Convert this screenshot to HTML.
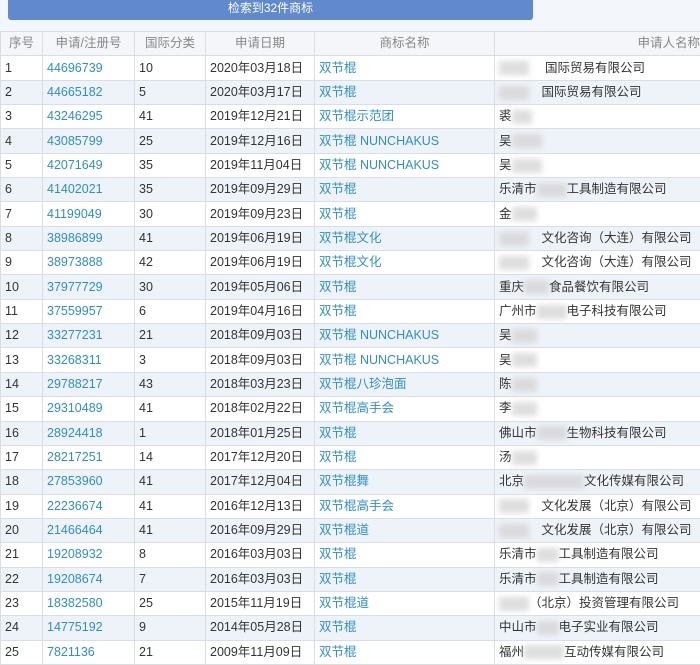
<!DOCTYPE html><html><head><meta charset="utf-8"><style>
body{margin:0;width:700px;height:664px;overflow:hidden;background:#fff;font-family:"Liberation Sans","Noto Sans CJK SC",sans-serif;font-size:12.5px;color:#333}
.top{position:absolute;left:0;top:0;width:700px;height:31px;background:#f3f6fa}
.btn{position:absolute;left:8px;top:-2px;width:525px;height:22px;background:#6189cd;border-radius:3px;color:#fff;text-align:center;line-height:20px;font-size:12px}
table{position:absolute;left:0;top:31px;border-collapse:collapse;width:760px;table-layout:fixed}
tr{height:24.35px}
td,th{border:1px solid #d9dee5;padding:0 0 0 4px;white-space:nowrap;overflow:hidden;text-align:left;font-weight:normal;line-height:15px;vertical-align:middle}
th{background:#f4f6f9;color:#888;text-align:center;padding:0}
tr:nth-child(odd) td{background:#eef3f9}
.b{color:#2f8fc8}
.z{display:inline-block;height:14px;background:#d0d0d0;filter:blur(3px);vertical-align:middle;opacity:.7}
</style></head><body>
<div class="top"><div class="btn">检索到32件商标</div></div>
<table>
<colgroup><col style="width:42px"><col style="width:92px"><col style="width:71px"><col style="width:109px"><col style="width:180px"><col style="width:266px"></colgroup>
<tr><th>序号</th><th>申请/注册号</th><th>国际分类</th><th>申请日期</th><th>商标名称</th><th style="text-align:right;padding-right:60px">申请人名称</th></tr>
<tr><td>1</td><td class="b">44696739</td><td>10</td><td>2020年03月18日</td><td class="b">双节棍</td><td><span class="z" style="width:30px"></span>　 国际贸易有限公司</td></tr>
<tr><td>2</td><td class="b">44665182</td><td>5</td><td>2020年03月17日</td><td class="b">双节棍</td><td><span class="z" style="width:30px"></span>　国际贸易有限公司</td></tr>
<tr><td>3</td><td class="b">43246295</td><td>41</td><td>2019年12月21日</td><td class="b">双节棍示范团</td><td>裘<span class="z" style="width:20px"></span></td></tr>
<tr><td>4</td><td class="b">43085799</td><td>25</td><td>2019年12月16日</td><td class="b">双节棍 NUNCHAKUS</td><td>吴<span class="z" style="width:30px"></span></td></tr>
<tr><td>5</td><td class="b">42071649</td><td>35</td><td>2019年11月04日</td><td class="b">双节棍 NUNCHAKUS</td><td>吴<span class="z" style="width:30px"></span></td></tr>
<tr><td>6</td><td class="b">41402021</td><td>35</td><td>2019年09月29日</td><td class="b">双节棍</td><td>乐清市<span class="z" style="width:30px"></span>工具制造有限公司</td></tr>
<tr><td>7</td><td class="b">41199049</td><td>30</td><td>2019年09月23日</td><td class="b">双节棍</td><td>金<span class="z" style="width:25px"></span></td></tr>
<tr><td>8</td><td class="b">38986899</td><td>41</td><td>2019年06月19日</td><td class="b">双节棍文化</td><td><span class="z" style="width:30px"></span>　文化咨询（大连）有限公司</td></tr>
<tr><td>9</td><td class="b">38973888</td><td>42</td><td>2019年06月19日</td><td class="b">双节棍文化</td><td><span class="z" style="width:30px"></span>　文化咨询（大连）有限公司</td></tr>
<tr><td>10</td><td class="b">37977729</td><td>30</td><td>2019年05月06日</td><td class="b">双节棍</td><td>重庆<span class="z" style="width:25px"></span>食品餐饮有限公司</td></tr>
<tr><td>11</td><td class="b">37559957</td><td>6</td><td>2019年04月16日</td><td class="b">双节棍</td><td>广州市<span class="z" style="width:30px"></span>电子科技有限公司</td></tr>
<tr><td>12</td><td class="b">33277231</td><td>21</td><td>2018年09月03日</td><td class="b">双节棍 NUNCHAKUS</td><td>吴<span class="z" style="width:25px"></span></td></tr>
<tr><td>13</td><td class="b">33268311</td><td>3</td><td>2018年09月03日</td><td class="b">双节棍 NUNCHAKUS</td><td>吴<span class="z" style="width:25px"></span></td></tr>
<tr><td>14</td><td class="b">29788217</td><td>43</td><td>2018年03月23日</td><td class="b">双节棍八珍泡面</td><td>陈<span class="z" style="width:25px"></span></td></tr>
<tr><td>15</td><td class="b">29310489</td><td>41</td><td>2018年02月22日</td><td class="b">双节棍高手会</td><td>李<span class="z" style="width:25px"></span></td></tr>
<tr><td>16</td><td class="b">28924418</td><td>1</td><td>2018年01月25日</td><td class="b">双节棍</td><td>佛山市<span class="z" style="width:30px"></span>生物科技有限公司</td></tr>
<tr><td>17</td><td class="b">28217251</td><td>14</td><td>2017年12月20日</td><td class="b">双节棍</td><td>汤<span class="z" style="width:25px"></span></td></tr>
<tr><td>18</td><td class="b">27853960</td><td>41</td><td>2017年12月04日</td><td class="b">双节棍舞</td><td>北京<span class="z" style="width:60px"></span>文化传媒有限公司</td></tr>
<tr><td>19</td><td class="b">22236674</td><td>41</td><td>2016年12月13日</td><td class="b">双节棍高手会</td><td><span class="z" style="width:30px"></span>　文化发展（北京）有限公司</td></tr>
<tr><td>20</td><td class="b">21466464</td><td>41</td><td>2016年09月29日</td><td class="b">双节棍道</td><td><span class="z" style="width:30px"></span>　文化发展（北京）有限公司</td></tr>
<tr><td>21</td><td class="b">19208932</td><td>8</td><td>2016年03月03日</td><td class="b">双节棍</td><td>乐清市<span class="z" style="width:22px"></span>工具制造有限公司</td></tr>
<tr><td>22</td><td class="b">19208674</td><td>7</td><td>2016年03月03日</td><td class="b">双节棍</td><td>乐清市<span class="z" style="width:22px"></span>工具制造有限公司</td></tr>
<tr><td>23</td><td class="b">18382580</td><td>25</td><td>2015年11月19日</td><td class="b">双节棍道</td><td><span class="z" style="width:30px"></span>（北京）投资管理有限公司</td></tr>
<tr><td>24</td><td class="b">14775192</td><td>9</td><td>2014年05月28日</td><td class="b">双节棍</td><td>中山市<span class="z" style="width:22px"></span>电子实业有限公司</td></tr>
<tr><td>25</td><td class="b">7821136</td><td>21</td><td>2009年11月09日</td><td class="b">双节棍</td><td>福州<span class="z" style="width:40px"></span>互动传媒有限公司</td></tr>
</table>
</body></html>
